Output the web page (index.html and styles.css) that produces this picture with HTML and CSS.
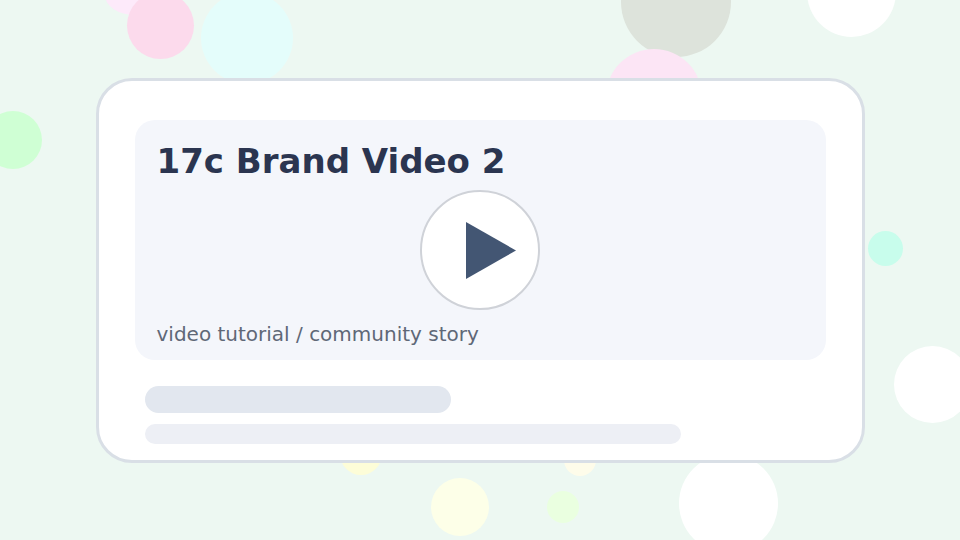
FILE: index.html
```html
<!DOCTYPE html>
<html>
<head>
<meta name="viewport" content="width=device-width, initial-scale=1">
<link rel="stylesheet" href="styles.css">
</head>
<body>

<div class="bubbles">
  <span class="bubble b1"></span>
  <span class="bubble b2"></span>
  <span class="bubble b3"></span>
  <span class="bubble b4"></span>
  <span class="bubble b5"></span>
  <span class="bubble b6"></span>
  <span class="bubble b7"></span>
  <span class="bubble b8"></span>
  <span class="bubble b9"></span>
  <span class="bubble b10"></span>
  <span class="bubble b11"></span>
  <span class="bubble b12"></span>
  <span class="bubble b13"></span>
  <span class="bubble b14"></span>
</div>

<div class="card">
  <div class="hero">
    <h1 class="title">17c Brand Video 2</h1>
    <p class="subtitle">video tutorial / community story</p>
    <div class="play">
      <svg class="play-icon" width="50" height="57" viewBox="0 0 50 57"><polygon points="0,0 50,28.5 0,57" fill="#435673"/></svg>
    </div>
  </div>
  <div class="bar bar-long"></div>
  <div class="bar bar-short"></div>
</div>

</body>
</html>
```

FILE: styles.css
```css
body, html {
  height: 100%;
  margin: 0;
  font-family: "DejaVu Sans", sans-serif;
  background: #edf8f2;
  overflow: hidden;
}

body {
  display: flex;
  align-items: flex-start;
  position: relative;
}

/* background circles */
.bubble { position: absolute; border-radius: 50%; }
.b1 { left: 105px; top: -25px; width: 60px; height: 40px; background: #fdeafa; }
.b2 { left: 127px; top: -8px; width: 67px; height: 67px; background: #fcdaec; }
.b3 { left: 201px; top: -8px; width: 92px; height: 92px; background: #e4fdfb; }
.b4 { left: -16px; top: 111px; width: 58px; height: 58px; background: #cfffd4; }
.b5 { left: 621px; top: -53px; width: 110px; height: 110px; background: #dde3db; }
.b6 { left: 606px; top: 49px; width: 96px; height: 96px; background: #fce5f5; }
.b7 { left: 807px; top: -53px; width: 89px; height: 90px; background: #ffffff; }
.b8 { left: 868px; top: 231px; width: 35px; height: 35px; background: #c8fdec; }
.b9 { left: 894px; top: 346px; width: 77px; height: 77px; background: #ffffff; }
.b10 { left: 679px; top: 454px; width: 99px; height: 99px; background: #ffffff; }
.b11 { left: 431px; top: 478px; width: 58px; height: 58px; background: #fdffe8; }
.b12 { left: 547px; top: 491px; width: 32px; height: 32px; background: #eaffe0; }
.b13 { left: 564px; top: 444px; width: 32px; height: 32px; background: #fefcea; }
.b14 { left: 340px; top: 433px; width: 42px; height: 42px; background: #fdfdd8; }

.card {
  position: relative;
  box-sizing: border-box;
  width: 769px;
  height: 385px;
  margin: 78px 0 0 96px;
  padding: 39px 36px 0;
  background: #fff;
  border: 3px solid #d9dfe6;
  border-radius: 36px;
}

.hero {
  position: relative;
  box-sizing: border-box;
  height: 240px;
  padding: 21px 21.5px 14px;
  display: flex;
  flex-direction: column;
  justify-content: space-between;
  background: #f4f6fb;
  border-radius: 20px;
}

.title {
  margin: 0;
  font-size: 34px;
  line-height: 40px;
  font-weight: bold;
  color: #2b3550;
}

.subtitle {
  margin: 0;
  font-size: 20px;
  line-height: 24px;
  color: #5f6877;
}

.play {
  position: absolute;
  left: 285px;
  top: 70px;
  box-sizing: border-box;
  width: 120px;
  height: 120px;
  display: flex;
  justify-content: center;
  align-items: center;
  background: #fff;
  border: 2px solid #cfd2d8;
  border-radius: 50%;
}

/* triangle sits right of centre */
.play-icon { margin-left: 22px; }

.bar { margin-left: 10px; border-radius: 14px; }
.bar-long { width: 306px; height: 27px; margin-top: 26px; background: #e2e7ef; }
.bar-short { width: 536px; height: 20px; margin-top: 11px; background: #edeff5; }
```
